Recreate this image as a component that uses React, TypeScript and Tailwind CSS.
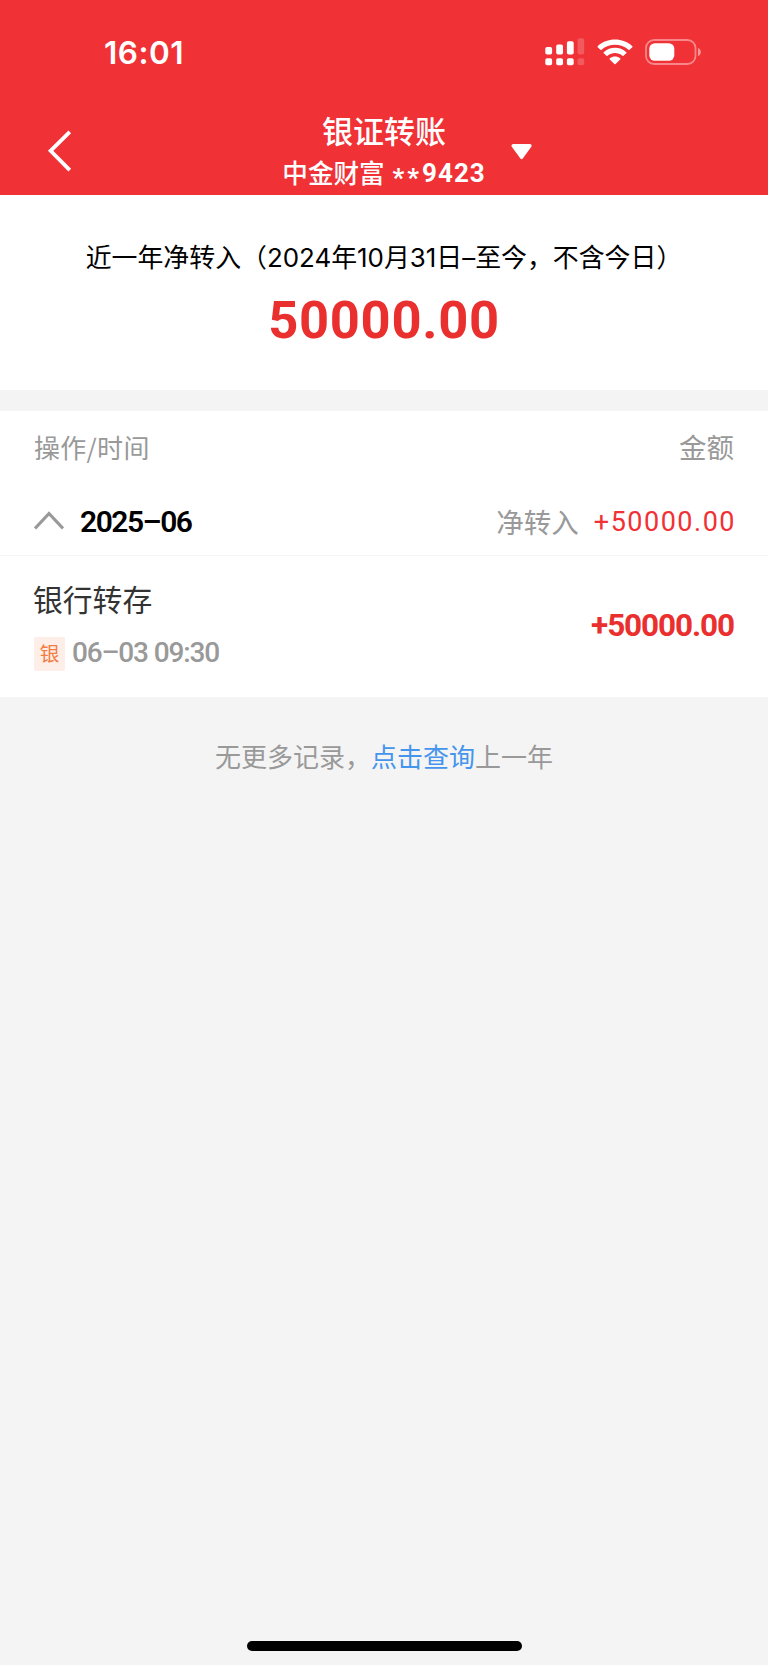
import React from 'react';

interface TransferRecord {
  title: string;
  tag: string;
  time: string;
  amount: string;
}

const records: TransferRecord[] = [
  { title: '银行转存', tag: '银', time: '06–03 09:30', amount: '+50000.00' },
];

const StatusBar: React.FC = () => (
  <div className="flex h-[104px] items-center justify-between pl-[104px] pr-[66.5px]">
    <span className="mt-[2px] font-['Inter',sans-serif] text-[31.5px] font-semibold leading-none tracking-[0.5px]">16:01</span>
    <div className="flex items-center">
      <svg width="40" height="28" viewBox="0 0 40 28" fill="currentColor">
        <rect x="0.3" y="9" width="6.8" height="7.5" rx="1.8" />
        <rect x="11.2" y="6.5" width="6.8" height="10" rx="1.8" />
        <rect x="21.9" y="3.3" width="6.8" height="13.2" rx="1.8" />
        <rect x="32.6" y="0.2" width="6.6" height="16.3" rx="1.8" opacity="0.2" />
        <rect x="0.3" y="20.2" width="6.8" height="7" rx="1.8" />
        <rect x="11.2" y="20.2" width="6.8" height="7" rx="1.8" />
        <rect x="21.9" y="20.2" width="6.8" height="7" rx="1.8" />
        <rect x="32.6" y="20.2" width="6.6" height="7" rx="1.8" opacity="0.2" />
      </svg>
      <svg className="ml-3" width="36" height="26" viewBox="0 0 36 26" fill="currentColor">
        <path d="M0.7 7.2C10 -1.6 26 -1.6 35.3 7.2Q35.8 7.7 35.3 8.2L32.6 10.8Q32 11.3 31.5 10.8C24 4 12 4 4.5 10.8Q4 11.3 3.4 10.8L0.7 8.2Q0.2 7.7 0.7 7.2Z" />
        <path d="M6.7 13.2C13 7.3 23 7.3 29.3 13.2Q29.8 13.7 29.3 14.2L26.5 16.8Q26 17.3 25.5 16.8C21 13 15 13 10.5 16.8Q10 17.3 9.5 16.8L6.7 14.2Q6.2 13.7 6.7 13.2Z" />
        <path d="M12.8 19.3C15.8 16.8 20.2 16.8 23.2 19.3Q23.8 19.8 23.2 20.4L18.6 25Q18 25.5 17.4 25L12.8 20.4Q12.2 19.8 12.8 19.3Z" />
      </svg>
      <svg className="ml-3" width="57" height="26" viewBox="0 0 57 26" fill="none">
        <rect x="1" y="1" width="49.5" height="24" rx="8" stroke="white" strokeOpacity="0.42" strokeWidth="1.8" />
        <rect x="4.3" y="4.2" width="25" height="17.6" rx="5.5" fill="white" />
        <path d="M53 9Q55.8 10 55.8 13T53 17Z" fill="white" fillOpacity="0.5" />
      </svg>
    </div>
  </div>
);

const NavBar: React.FC = () => (
  <div className="relative flex h-[91px] flex-col items-center">
    <button className="absolute left-[47px] top-[26px]">
      <svg width="26" height="42" viewBox="0 0 26 42" fill="none" stroke="currentColor" strokeWidth="3.8">
        <path d="M22.8 1.8L3.6 20.8L22.8 40.2" />
      </svg>
    </button>
    <h1 className="mt-[9px] text-[31px] font-medium leading-[34px]">银证转账</h1>
    <div className="mt-[5px] flex items-center whitespace-pre text-[25.6px] font-medium leading-[36px]">
      <span>中金财富 </span>
      <span className="ml-[2px] mt-[3px] font-['Roboto',sans-serif] text-[26px] font-bold tracking-[1px]">
        <span className="inline-block translate-y-[5px] tracking-[3px]">**</span>9423
      </span>
    </div>
    <svg className="absolute left-[511px] top-[39px]" width="22" height="18" viewBox="0 0 22 18" fill="currentColor">
      <path d="M2.3 1H18.8Q21.5 1.4 20.3 3.8L11.8 15.6Q10.6 17 9.4 15.6L0.8 3.8Q-0.4 1.4 2.3 1Z" />
    </svg>
  </div>
);

const RecordRow: React.FC<{ record: TransferRecord }> = ({ record }) => (
  <div className="flex h-[141px] justify-between px-[34px] pt-[21px]">
    <div>
      <div className="-ml-px text-[29.8px] leading-[42px] text-[#333]">{record.title}</div>
      <div className="mt-[18px] flex items-center">
        <span className="flex h-[34px] w-[31px] items-center justify-center rounded-[2px] bg-[#fdeee7] pb-[2px] text-[19.5px] text-[#f47b42]">
          {record.tag}
        </span>
        <span className="ml-[7px] pb-[2px] font-['Roboto',sans-serif] text-[28px] font-medium leading-[30px] tracking-[-1.15px] text-[#999]">
          {record.time}
        </span>
      </div>
    </div>
    <span className="mt-[33px] font-['Roboto',sans-serif] text-[31.5px] font-bold leading-none tracking-[-1.1px] text-[#ea2f2f]">
      {record.amount}
    </span>
  </div>
);

export default function App() {
  return (
    <div className="flex h-[1665px] w-[768px] flex-col bg-[#f4f4f4] font-['Noto_Sans_CJK_SC',sans-serif]">
      <header className="h-[195px] bg-[#f03136] text-white">
        <StatusBar />
        <NavBar />
      </header>

      {/* Net transfer summary */}
      <section className="flex h-[195px] flex-col items-center bg-white">
        <p className="mt-[45px] whitespace-nowrap font-['Inter','Noto_Sans_CJK_SC',sans-serif] text-[25.9px] leading-[36px] text-black">
          近一年净转入（2024年10月31日–至今，不含今日）
        </p>
        <p className="mt-[18px] font-['Roboto',sans-serif] text-[52.5px] font-bold leading-[52px] tracking-[0.7px] text-[#ea2f2f]">
          50000.00
        </p>
      </section>

      <section className="mt-[21px] bg-white">
        <div className="flex h-[74px] items-center justify-between px-[34px] pb-[3px] text-[#999]">
          <span className="text-[26px] tracking-[0.3px]">操作/时间</span>
          <span className="text-[27.5px]">金额</span>
        </div>
        <div className="flex h-[71px] items-center border-b border-[#f5f5f5] px-[34px] pt-[3px]">
          <svg className="-mt-[2px]" width="30" height="20" viewBox="0 0 30 20" fill="none" stroke="#999" strokeWidth="3.2">
            <path d="M1 17.5L15 2.5L29 17.5" />
          </svg>
          <span className="ml-[16px] font-['Roboto',sans-serif] text-[30px] font-semibold leading-none tracking-[-1.5px] text-black">
            2025–06
          </span>
          <span className="ml-auto text-[27.5px] text-[#999]">净转入</span>
          <span className="-mr-[2px] ml-[15px] mt-[2px] font-['Roboto',sans-serif] text-[27px] leading-none tracking-[1.5px] text-[#f03136]">
            +50000.00
          </span>
        </div>
        {records.map((record) => (
          <RecordRow key={record.time} record={record} />
        ))}
      </section>

      <p className="mt-[40px] text-center text-[26px] leading-[38px] text-[#999]">
        无更多记录，<a className="text-[#4595ec]">点击查询</a>上一年
      </p>

      <div className="mx-auto mb-[14px] mt-auto h-[10px] w-[275px] rounded-full bg-black" />
    </div>
  );
}
